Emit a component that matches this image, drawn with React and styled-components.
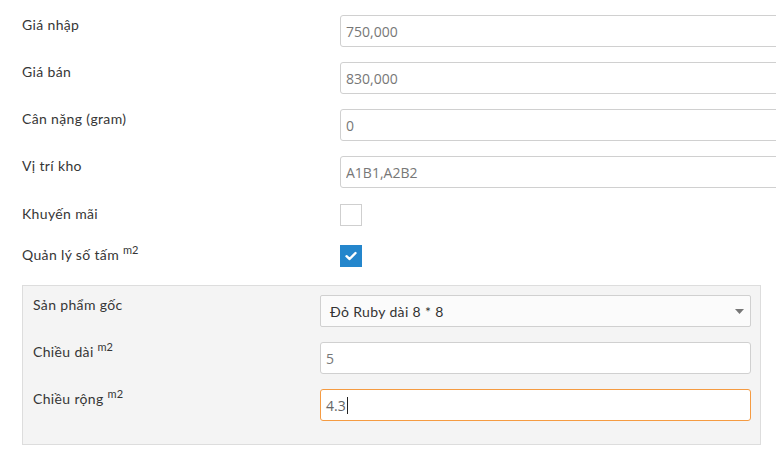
import styled, { createGlobalStyle } from "styled-components";

const GlobalStyle = createGlobalStyle`
  html, body {
    margin: 0;
    background: #ffffff;
    overflow: hidden;
  }
`;

const Form = styled.div`
  padding: 15px 0 0 22px;
  width: 754px;
`;

const Row = styled.div`
  display: flex;
  align-items: flex-start;
  margin-bottom: ${({ mb }) => (mb === undefined ? 15 : mb)}px;
`;

const Label = styled.div`
  flex: 0 0 ${({ w }) => w || 318}px;
  font-family: Lato, "Open Sans", sans-serif;
  font-size: 14px;
  letter-spacing: 0.35px;
  line-height: 20px;
  color: #363636;
  sup {
    font-size: 11px;
    letter-spacing: 0;
    vertical-align: 0;
    position: relative;
    top: -6px;
  }
`;

const Input = styled.input`
  box-sizing: border-box;
  width: ${({ wide }) => (wide ? "460px" : "100%")};
  flex: ${({ wide }) => (wide ? "0 0 460px" : "1")};
  height: 32px;
  padding: 0 5px;
  border: 1px solid #d0d0d0;
  border-radius: 3px;
  background: #ffffff;
  font-family: "Open Sans", Arial, sans-serif;
  font-size: 14px;
  color: #777777;
  outline: none;
`;

const FocusedInput = styled.div`
  box-sizing: border-box;
  flex: 1;
  height: 32px;
  padding: 0 5px;
  border: 1px solid #f59b42;
  border-radius: 3px;
  background: #ffffff;
  display: flex;
  align-items: center;
  font-family: "Open Sans", Arial, sans-serif;
  font-size: 14px;
  color: #666666;
`;

const Caret = styled.span`
  display: inline-block;
  width: 1px;
  height: 17px;
  margin-left: 1px;
  background: #222222;
`;

const Check = styled.div`
  box-sizing: border-box;
  width: 22px;
  height: 22px;
  border: ${({ checked }) => (checked ? "none" : "1px solid #cfcfcf")};
  background: ${({ checked }) => (checked ? "#2486cc" : "#ffffff")};
  display: flex;
  align-items: center;
  justify-content: center;
`;

const Panel = styled.div`
  margin-right: 15px;
  background: #f4f4f4;
  border: 1px solid #dddddd;
  padding: 9px 9px 23px 10px;
`;

const Select = styled.div`
  box-sizing: border-box;
  flex: 1;
  height: 32px;
  padding: 0 6px 0 9px;
  border: 1px solid #d0d0d0;
  border-radius: 2px;
  background: #fbfbfb;
  display: flex;
  align-items: center;
  justify-content: space-between;
  font-family: Lato, "Open Sans", sans-serif;
  font-size: 14px;
  letter-spacing: 0.35px;
  color: #333333;
`;

const topFields = [
  ["Giá nhập", "750,000"],
  ["Giá bán", "830,000"],
  ["Cân nặng (gram)", "0"],
  ["Vị trí kho", "A1B1,A2B2"],
];

export default function App() {
  return (
    <>
      <GlobalStyle />
      <Form>
        {topFields.map(([label, value], i) => (
          <Row key={label} mb={i === topFields.length - 1 ? 16 : 15}>
            <Label>{label}</Label>
            <Input wide readOnly value={value} />
          </Row>
        ))}
        <Row mb={19}>
          <Label>Khuyến mãi</Label>
          <Check />
        </Row>
        <Row mb={18}>
          <Label>
            Quản lý số tấm <sup>m2</sup>
          </Label>
          <Check checked>
            <svg width="12" height="10" viewBox="0 0 12 10">
              <path
                d="M1.5 5.2 L4.6 8 L10.5 2"
                fill="none"
                stroke="#ffffff"
                strokeWidth="2.4"
                strokeLinecap="round"
                strokeLinejoin="round"
              />
            </svg>
          </Check>
        </Row>
        <Panel>
          <Row>
            <Label w={287}>Sản phẩm gốc</Label>
            <Select>
              <span>Đỏ Ruby dài 8 * 8</span>
              <svg width="9" height="5" viewBox="0 0 9 5">
                <path d="M0 0 H9 L4.5 5 Z" fill="#777777" />
              </svg>
            </Select>
          </Row>
          <Row>
            <Label w={287}>
              Chiều dài <sup>m2</sup>
            </Label>
            <Input readOnly value="5" />
          </Row>
          <Row mb={0}>
            <Label w={287}>
              Chiều rộng <sup>m2</sup>
            </Label>
            <FocusedInput>
              4.3
              <Caret />
            </FocusedInput>
          </Row>
        </Panel>
      </Form>
    </>
  );
}
